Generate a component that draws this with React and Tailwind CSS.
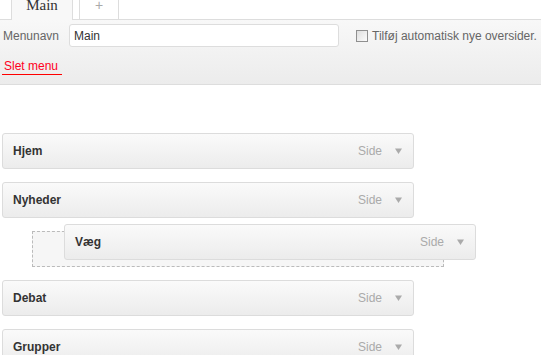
import React from 'react';

const items = ['Hjem', 'Nyheder', null, 'Debat', 'Grupper'];

// Small down triangle used in every menu row
const Arrow = () => (
  <svg width="7" height="6" viewBox="0 0 7 6" className="ml-[13px]">
    <path d="M0 0.5 L7 0.5 L3.5 6 Z" fill="#aaaaaa" />
  </svg>
);

const MenuItem = ({ label, className = '' }) => (
  <div
    className={`h-[36px] w-[412px] border border-[#dcdcdc] rounded-[3px] bg-linear-to-b from-[#fafafa] to-[#ececec] flex items-center pl-[10px] pr-[11px] ${className}`}
  >
    <span className="font-bold text-[#333333] flex-1">{label}</span>
    <span className="text-[#aaaaaa]">Side</span>
    <Arrow />
  </div>
);

const App = () => {
  return (
    <div className="relative w-[541px] h-[355px] overflow-hidden bg-white font-['Liberation_Sans',Arial,sans-serif] text-[12px] leading-[14px]">
      {/* Tabs */}
      <div className="flex h-[20px] border-b border-[#dddddd] pl-[11px]">
        <div className="w-[62px] h-[20px] border-x border-[#dddddd] bg-[#f8f8f8] flex justify-center font-['Liberation_Serif',serif] text-[15px] leading-[10px] text-[#333333]">
          <span>Main</span>
        </div>
        <div className="ml-[6px] w-[40px] h-[19px] border-x border-[#dddddd] bg-white flex justify-center text-[#aaaaaa] text-[14px] leading-[10px]">
          <span>+</span>
        </div>
      </div>

      {/* Settings panel */}
      <div className="h-[65px] border-b border-[#dddddd] bg-linear-to-b from-[#f8f8f8] to-[#ececec] pt-[4px]">
        <div className="flex items-center h-[23px]">
          <span className="pl-[3px] w-[69px] text-[#666666]">Menunavn</span>
          <div className="w-[270px] h-[23px] border border-[#dddddd] rounded-[3px] bg-white flex items-center pl-[4px] text-[#333333]">
            Main
          </div>
          <div className="ml-[17px] w-[12px] h-[12px] border border-[#8f8f8f] bg-linear-to-br from-[#dedede] to-[#fbfbfb]" />
          <span className="ml-[4px] text-[#666666] whitespace-nowrap">Tilføj automatisk nye oversider.</span>
        </div>
        <div className="mt-[12px] flex">
          <span className="ml-[2px] pl-[2px] pr-[4px] pb-[1px] border-b border-[#ff0000] text-[#ff0022]">Slet menu</span>
        </div>
      </div>

      {/* Menu items */}
      <div className="mt-[48px] pl-[2px] flex flex-col gap-[13px]">
        {items.map((label, i) =>
          label ? (
            <MenuItem key={i} label={label} />
          ) : (
            <div key={i} className="ml-[30px] w-[412px] h-[36px] border border-dashed border-[#bbbbbb] bg-[#f6f6f6]" />
          )
        )}
      </div>

      {/* Item being dragged */}
      <MenuItem label="Væg" className="absolute left-[64px] top-[224px]" />
    </div>
  );
};

export default App;
